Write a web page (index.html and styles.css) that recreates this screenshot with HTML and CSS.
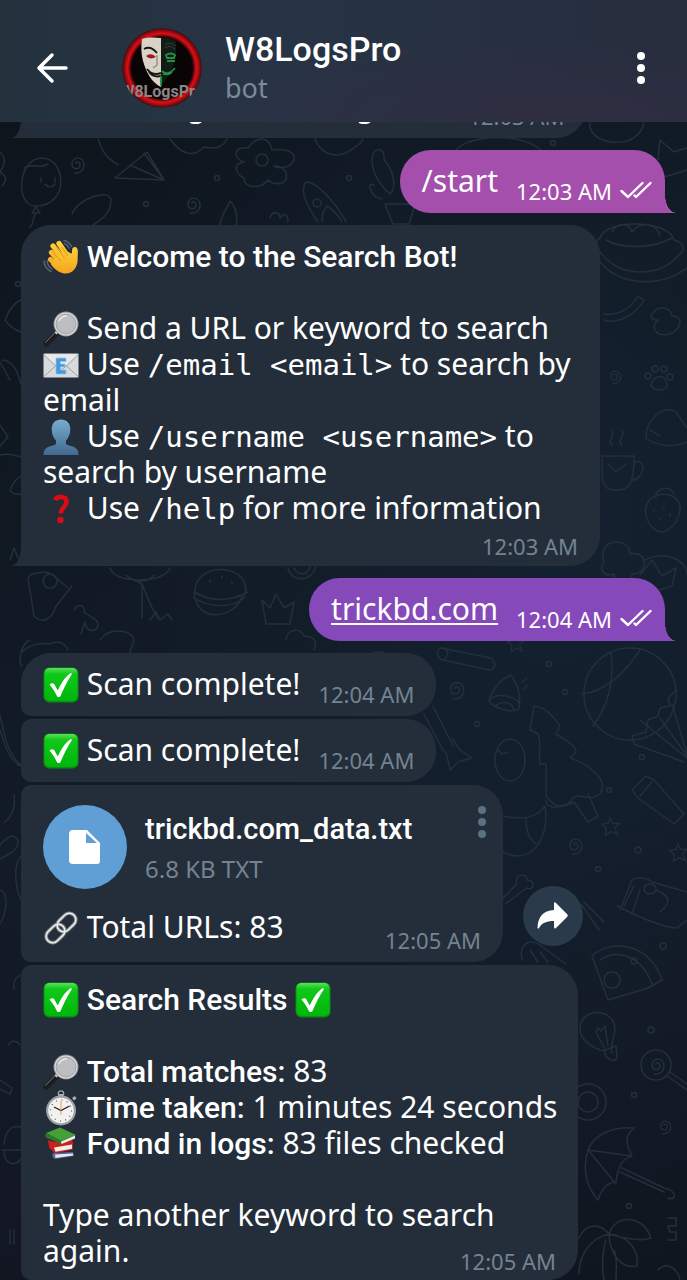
FILE: index.html
```html
<!DOCTYPE html>
<html lang="en">
<head>
  <meta charset="UTF-8" />
  <meta name="viewport" content="width=device-width, initial-scale=1.0" />
  <title>W8LogsPro</title>
  <link rel="stylesheet" href="styles.css">
</head>
<body>
  <!-- Shared emoji -->
  <svg class="sprite" aria-hidden="true">
    <defs>
      <linearGradient id="green" x1="0" y1="0" x2="0" y2="1">
        <stop offset="0" stop-color="#5be05b"/><stop offset=".18" stop-color="#10c81a"/><stop offset="1" stop-color="#00b50c"/>
      </linearGradient>
      <linearGradient id="person" x1="0" y1="0" x2="0" y2="1">
        <stop offset="0" stop-color="#79acd0"/><stop offset="1" stop-color="#41698f"/>
      </linearGradient>
      <linearGradient id="hand" x1="0" y1="0" x2="0" y2="1">
        <stop offset="0" stop-color="#ffcf3a"/><stop offset="1" stop-color="#f3a51c"/>
      </linearGradient>
    </defs>
    <symbol id="check" viewBox="0 0 36 36">
      <rect x=".5" y=".5" width="35" height="35" rx="6" fill="#078f12"/>
      <rect x="1.5" y="1" width="33" height="33" rx="5" fill="url(#green)"/>
      <path d="M6.500 17.500c2.500-2 4.500-1.500 5.500 1l2.700 5C18 16.500 22 10 27 6.500c1-.6 2.500-.2 1.500 1.200C24 14.500 20.500 22 17.500 29c-.6 1.300-3 1.400-3.600 0C12 25 9.500 21 6.500 17.500z" fill="#fff"/>
    </symbol>
    <symbol id="glass" viewBox="0 0 36 36">
      <path d="M3 33 14 22" stroke="#1d1d1f" stroke-width="5.500" stroke-linecap="round"/>
      <path d="M2.500 31.500 12 21.500" stroke="#77797c" stroke-width="1"/>
      <path d="m12.500 22.500 3.500-3.500" stroke="#c9cbcd" stroke-width="3"/>
      <circle cx="23" cy="13" r="12.500" fill="#8e9194"/>
      <circle cx="23" cy="13" r="11.500" fill="#dcdedf"/>
      <circle cx="23" cy="13" r="10" fill="#bcbec1" stroke="#94979a" stroke-width=".8"/>
      <path d="M16 10a8 8 0 0 1 8-5" fill="none" stroke="#e6e7e8" stroke-width="1.500"/>
    </symbol>
    <symbol id="wave" viewBox="0 0 36 36">
      <g stroke="url(#hand)" stroke-linecap="round" stroke-width="5.200" fill="none">
        <path d="M8.500 13.500 18 24M10 7l12 14M16 4.500 26 19M7.500 20.500l7 7"/>
      </g>
      <path d="M12 20c4-5 11-10 16-5.500l1-.5c0-3.500 0-5 1.800-5.700 2.200-.8 3.900 1 4 3.500.1 3-.2 6-.2 9.500C34.500 29 29 35.500 21 34.500c-5-.7-10-5-13-9z" fill="url(#hand)"/>
      <path d="M9 12.500 18 22M13 8l9 11.500M18.500 8 25 17" stroke="#d98f15" stroke-width=".8" fill="none"/>
      <path d="M1 22c.3 5 3 8.500 7 10.500M4 22c.5 3.500 2.200 6 5 8M21 1.500c3.500.5 6 3 7.500 6M21.500 4.500c2 .7 3.500 2.300 4.500 4.500" fill="none" stroke="#59646d" stroke-width="1.500" stroke-linecap="round"/>
    </symbol>
    <symbol id="mail" viewBox="0 0 36 36">
      <rect x=".5" y="6.500" width="35" height="24" rx="1" fill="#d8dadb"/>
      <path d="M.5 7.500 15 21c2 1.700 4 1.700 6 0L35.500 7.500M.5 30 13 18.500M35.500 30 23 18.500" fill="#e8e9e9" stroke="#8d9296" stroke-width=".8"/>
      <path d="M13 11h10v3.500h-5.500V17H22v3h-4.500v3H23v4H13z" fill="#4a98dd" stroke="#90c6ee" stroke-width=".7"/>
    </symbol>
    <symbol id="user" viewBox="0 0 36 36">
      <path d="M18 .5c5.800 0 9.500 4 9.300 10-.1 4.800-1.800 8.500-4.300 11v3c0 1.500 3.500 2 6.500 3 4 1.400 6 3.500 6 8.500H.5c0-5 2-7.100 6-8.500 3-1 6.500-1.500 6.500-3v-3c-2.500-2.500-4.200-6.200-4.300-11C8.500 4.500 12.200.5 18 .5z" fill="url(#person)"/>
    </symbol>
    <symbol id="question" viewBox="0 0 36 36">
      <path d="M12 9C14 4.800 23.500 4.500 23.500 11c0 4.500-5.500 5.500-5.800 11.500" fill="none" stroke="#e00b12" stroke-width="4.500"/>
      <circle cx="17.500" cy="29" r="3.200" fill="#e00b12"/>
    </symbol>
    <symbol id="link" viewBox="0 0 36 36">
      <g fill="none" stroke="#82868a" stroke-width="3.600">
        <rect x="13" y="6" width="21" height="13" rx="6.500" transform="rotate(-44 23.500 12.500)"/>
        <rect x="2" y="17" width="21" height="13" rx="6.500" transform="rotate(-44 12.500 23.500)"/>
      </g>
      <g fill="none" stroke="#eceded" stroke-width="1.500">
        <rect x="13" y="6" width="21" height="13" rx="6.500" transform="rotate(-44 23.500 12.500)"/>
        <rect x="2" y="17" width="21" height="13" rx="6.500" transform="rotate(-44 12.500 23.500)"/>
      </g>
    </symbol>
    <symbol id="stopwatch" viewBox="0 0 36 36">
      <circle cx="18" cy="3.500" r="2.700" fill="none" stroke="#a3a7aa" stroke-width="1.300"/>
      <path d="M16 4h4v4h-4zM29 8l3-2 1.500 2.500-2.500 2z" fill="#adb0b3"/>
      <circle cx="18" cy="20.500" r="15" fill="#9da1a4"/>
      <circle cx="18" cy="20.500" r="12.800" fill="#f1f1ef"/>
      <circle cx="18" cy="20.500" r="10.500" fill="none" stroke="#5a5d60" stroke-width="1.200" stroke-dasharray="1 4.500"/>
      <path d="m11 17 7 3.500 8.500-4.500" fill="none" stroke="#222" stroke-width="1.200"/>
      <path d="M18 11v14" stroke="#ea8a3c" stroke-width=".8"/>
    </symbol>
    <symbol id="books" viewBox="0 0 36 36">
      <path d="m10 27 20-1 1 4-19 3c-2.500-.7-3.500-4-2-6z" fill="#5863a8"/>
      <path d="m12 28.500 18-1v2l-17.500 2.500z" fill="#e9e9e4"/>
      <path d="M5 14c8 3 15 3 24-.5l1 3v7L12 27.500l-6-6z" fill="#c9201f"/>
      <path d="m11 21.500 18-3v4.200l-16.500 3z" fill="#efeee8"/>
      <path d="M3 7 17 1.500 33 9 18 15z" fill="#45a038"/>
      <path d="M3 7c-1.500 2.500-.5 4 1 5l14 6 14-5.500v-2L18 15z" fill="#2c7828"/>
      <path d="m18 15.500 14-6v3l-13.500 5.500z" fill="#eceee6"/>
    </symbol>
    <symbol id="ticks" viewBox="0 0 32 18">
      <path d="m1.500 10 6.500 6L22.500 2M14.500 14.500l1.500 1.500L30.500 2" fill="none" stroke="#fff" stroke-width="2.400" stroke-linecap="round" stroke-linejoin="round"/>
    </symbol>
    <symbol id="dots" viewBox="0 0 10 34">
      <circle cx="5" cy="5" r="4"/><circle cx="5" cy="17" r="4"/><circle cx="5" cy="29" r="4"/>
    </symbol>
    <symbol id="spiral" viewBox="0 0 24 24">
      <path d="M12 12c-1-3 4-3 4 1 0 5-8 5-8-1 0-8 12-8 12 1 0 6-5 9-10 8"/>
    </symbol>
    <symbol id="star" viewBox="0 0 24 24">
      <path d="m11 2 3 6 7 0-5 5 3 7-7-3-6 4 1-7-5-5 7-1z"/>
    </symbol>
  </svg>

  <header class="topbar">
    <button class="icon-btn" aria-label="Back">
      <svg width="34" height="34" viewBox="0 0 34 34"><path d="M30 17H3M16 4 3 17l13 13" fill="none" stroke="#fff" stroke-width="3.500" stroke-linecap="round" stroke-linejoin="round"/></svg>
    </button>
    <svg class="avatar" viewBox="0 0 80 80" role="img" aria-label="Bot avatar">
      <defs>
        <radialGradient id="ring">
          <stop offset="0" stop-color="#050505"/><stop offset=".76" stop-color="#0b0405"/><stop offset=".82" stop-color="#8d0a10"/><stop offset=".86" stop-color="#e20d16"/><stop offset=".91" stop-color="#a80d14"/><stop offset="1" stop-color="#3d0a0e"/>
        </radialGradient>
        <clipPath id="round"><circle cx="40" cy="40" r="40"/></clipPath>
      </defs>
      <g clip-path="url(#round)">
        <circle cx="40" cy="40" r="40" fill="url(#ring)"/>
        <path d="M20 11c6-2 12-1.500 19-1v49c-9-4-15-15-18-26-2-7-2-15-1-22z" fill="#d9d3c6"/>
        <path d="M39 10c6-1 11 0 15 3 1 8 0 17-3 25-3 8-7 14-12 19z" fill="#131a17"/>
        <path d="M22 21c5-3 9-1 13 4M25 41c4 5 9 6 14 4M27 44c3 4 8 5 12 4" fill="none" stroke="#191412" stroke-width="2"/>
        <path d="M24 28c4-3 7-2 10 1-4 2-7 2-10-1z" fill="#a11325"/>
        <path d="M35 27v10l-4 3" fill="none" stroke="#9b9185" stroke-width="1.500"/>
        <path d="M44 27c3-2 6-2 9 0l-1 3h-7zM45 33h8M40 43c4 4 9 2 13-3M41 46c4 1 7 0 9-2M39 48v10" fill="none" stroke="#1f9140" stroke-width="1.800"/>
        <path d="M43 17c4-3 7-2 10 1M43 20c4-3 7-1 10 1" fill="none" stroke="#39433e"/>
        <text class="avatar-text" x="40" y="69" text-anchor="middle">W8LogsPro</text>
      </g>
    </svg>
    <div class="peer">
      <h1 class="peer-name">W8LogsPro</h1>
      <div class="peer-status">bot</div>
    </div>
    <button class="icon-btn menu-btn" aria-label="More options">
      <svg width="10" height="34" fill="#fff"><use href="#dots"/></svg>
    </button>
  </header>

  <main class="chat">
    <svg class="wallpaper" viewBox="0 122 687 1158" preserveAspectRatio="xMidYMin slice" aria-hidden="true">
      <g fill="none" stroke="#22303c" stroke-width="1.500" stroke-linecap="round" stroke-linejoin="round">
        <!-- balloon, plane, flower -->
        <path d="M42 158c24 0 28 48-6 48-22 0-18-48 6-48zM24 168c10-6 14 2 24-4M36 207l-4 6h8zM36 213c-5 6-1 10-6 14M41 178v4M55 178v4M45 184c3 4 7 4 10 0"/>
        <path d="m115 178 32-26 17 28zM130 165l34 15-20-27M98 139c6 18 12 20 20 26"/>
        <path d="M170 139c10 14 22 20 34 8 8 2 18 2 23-8"/>
        <path d="M248 148c10-14 22-10 24 2 14-2 24 2 22 10-4 10-18 8-20 6 10 0 14 6 12 14-6 6-14 4-18 0-8 10-24 8-24-2-8-4-12-14 0-16-12-4-10-16 4-14z"/><circle cx="262" cy="160" r="6"/>
        <path d="M72 214c6-16 38-26 39-14 0 16-14 22-20 26M220 225c2-12 8-18 10-24 6 6 8 16 6 24M270 218c2-8 10-6 10 0 4-6 8-4 8 4"/>
        <path d="M306 182c12 0 32 24 40 40M306 182c-8 10 4 28 12 40M322 222c0-8 2-14 6-16 4 4 10 8 14 16"/><circle cx="317" cy="203" r="4"/>
        <path d="M315 139c6 16 24 22 40 8 4-2 6-4 8-8M372 160c0-14 14-14 12 0 8 8 14 26 6 34-10-8-18-22-18-34zM374 185c-8-4-4 12 8 14M385 204h30l-6 20h-16z"/>
        <path d="M452 160c0-30 90-30 94 0M590 122c-4 24 50 30 54 0M658 160l2-20 14 12 13-4M661 178l26-8"/>
        <!-- right column -->
        <path d="M600 238c6-20 70-18 74 2 10 2 12 10 4 16-20 22-58 22-78-4-6-6-4-12 0-14zM606 240c18 10 48 8 66-2M612 232c6-12 18-8 20 0 8-12 26-8 28 4M600 262c20 24 60 26 87 6M604 320c10 4 30-2 40-20l-6-4c-8 14-22 20-34 18"/>
        <path d="M654 312c4-6 16-6 18 4 8 0 10 6 6 12-8 10-22 8-24 0 0-4 2-6 4-8-6 0-10-4-4-8z"/>
        <path d="M651 384c4-10 14-10 16 0 2 8-16 8-16 0z"/><circle cx="648" cy="376" r="3"/><circle cx="655" cy="369" r="3"/><circle cx="664" cy="369" r="3"/><circle cx="670" cy="377" r="3"/>
        <path d="M646 438c0-20 18-34 30-26l11 16M646 438c10 8 28 10 41 4M650 430l10 6M602 456h32c0 32-6 34-20 34-14 0-12-16-12-34zM634 462c14-4 10 18-2 18M608 464l8 8 10-8M612 446c-6-8 4-8 0-16M622 446c-6-8 4-8 0-16"/>
        <path d="M648 502c10-14 34-8 32 8-2 14-12 22-20 22-12-4-18-20-12-30zM656 498c-2-10 14-14 18-4M654 510v2M664 508v2M660 518v2M670 514v2M645 560c20-10 42 0 42 14M604 562c-8-24 26-26 26-8 18-4 20 20 2 20 0 14-18 12-18 0-10 4-16-6-10-12zM640 575l12-15 10 16 14-8-4 18-26 8"/>
        <!-- left edge -->
        <path d="M-4 150c8 4 12 10 4 22 6 4 8 8 2 14M5 320c4-10 10-18 16-20M5 320c4 6 10 10 16 12M2 360c6 0 14 4 19 24M0 362l10 18M0 425l8 12-12 14M0 455c8-2 14 0 21 2M10 490c4-10 8-12 11-14M10 490c4 6 8 4 11 4"/>
        <path d="M28 578c2-6 20-8 26-2l14 12M28 578l6 38c8 8 18 4 22-10l16-20M50 574a7 7 0 1 0 .1 0M10 560l4-12 4 10M74 610c4-8 12-4 10 2l12 8a6 6 0 1 1-10 4M85 622l-4 12"/>
        <path d="M110 568c4 16 54 16 60 0M126 575c8 8 22 8 28 0M134 580l8 4v34M142 584c6 14 8 22 16 34M150 620l6-8 4 8 8-6 4 6M30 640c-10 4-12 24-8 26M22 652c6-6 16-10 28-8 8-4 14-2 18 6"/>
        <path d="M196 584c8-20 46-20 50 4l-2 10c-14 12-38 8-50 0zM194 592c16 10 36 10 54 0M196 600c4 22 40 18 46-4M210 580v2M222 576v2M232 582v2M100 640c8-12 30-12 34 0l-4 12M262 600l8 8 6-14 8 14 10-6-4 22h-24zM288 568c4 16 26 14 28-4M294 568c4 8 14 8 16-2"/>
        <path d="M286 640c0-10 14-14 18-4 10 0 14 6 10 14M370 654c20-8 20 8 8 10"/>
        <!-- middle right -->
        <path d="m441 648 50 10c6 4 4 12-2 12l-46-10c-8-2-6-12-2-12zM444 648c6 2 4 10-1 12M511 675c-10 4-18 14-22 26 6 8 22 12 30 8 2-14-2-26-8-34zM489 700c8-8 26-4 31 4M496 706c6-6 16-4 18 4M522 682l4-3M524 690l3-5M433 706l20 40M424 714l20 38M446 752l4 18 8-8 14-4-12-8-8-12"/>
        <ellipse cx="510" cy="760" rx="15" ry="21"/><path d="m498 750 4 4 6-2"/>
        <path d="M534 706c14 2 20 12 26 20l-4 8c10 6 20 12 20 18l-6 6c18 6 40 22 30 36-14 10-22-6-30 8-10 8-18 2-24-6V764h-6c-2-8 2-20-2-30l-8-4z"/>
        <circle cx="630" cy="694" r="46"/><path d="M611 652c4 30-4 56-18 74M640 650c-20 30-40 42-58 44M676 690l-8 8 2 8-10 2-2 8-10 4-2 12-14 4 2 8 50 18M672 704l15 50M660 718l27 38M640 720l47 38"/>
        <path d="m632 790 14-14 8 4 30 34-10 10-36-26zM652 782l-12 14M546 800c0 12 20 6 28 2l14 20 10-6-10-22M503 816c20 4 34 2 42-10 4 24-6 48-26 50-8 0-12-2-16-4M526 818c0 14 4 22 10 26"/>
        <path d="m503 898 14-14c-4-10 10-12 10-4 10 0 6 12 0 8l-22 16M620 910l12-30c6-4 16-2 20 2l35 10M617 906c20 10 46 22 60 22l10-8M634 886l-10 20M640 890l-8 24M650 884a6 5 0 1 0 .1 0M656 890c14 6 16 12 4 22M581 904l18 26M584 902l20 20M522 960c-4-20 12-22 22-12l22 16M530 950l8 12M540 952l8 10"/>
        <path d="M592 956c16-16 56-16 70 24l-14 8-40 12zM600 960c14-10 40-8 52 24M612 972a8 8 0 1 0 .1 0M634 958a3 3 0 1 0 .1 0"/>
        <!-- bottom right -->
        <path d="M604 1051c-16-4-24-14-24-22 0-22 34-22 35 0 0 8-5 12-3 24M604 1051c2 8 10 12 13 7l-1-12M596 1032l2-4 3 3 4-5 3 20M596 1032l9 17M604 1051l11-5"/>
        <circle cx="656" cy="1065" r="15"/><circle cx="588" cy="1102" r="18"/><circle cx="588" cy="1102" r="10"/><path d="m667 1076 20 14M670 1072l17 12"/>
        <path d="M588 1150c6-16 26-24 46-22-10 8-8 16-2 28-8 2-14 8-16 26-8 0-14 6-18 18-12-14-16-30-10-50zM588 1150l44 6M588 1150l28 34M622 1168l42 20c14 2 12 14 4 10M620 1172l44 20"/>
        <path d="M609 1234c6-20 34-20 42 4-10 4-28 0-42-4zM609 1234c-10-12-24-10-30 4M609 1234c20 2 30 16 28 32-16 4-28-14-28-32zM609 1234c-18 4-30 20-30 40M606 1240c-4 12-4 30-2 40M614 1250c4 10 2 20 2 30M668 1218h8v8h-8l2 6h6v8h-8M658 1270c10-10 20 0 22 10"/>
        <!-- bottom left -->
        <path d="M0 715c4 20 8 40 21 50M0 730c6 20 10 30 20 36M14 795c2 14-2 22-10 28M0 845c10-12 16-10 18-4 0 10-8 12-18 18M21 856c-8 10-6 30 0 44M0 890c8 2 8 20 0 34M20 975c-8 6-6 10-6 14M8 1045c4-6 10-4 12 0M0 1080l12 8-2 6-12-6M4 1144c2-16 10-20 18-16M4 1150c0 14 10 18 18 8M2 1150h20M10 1230v14M14 1230v14"/>
      </g>
      <g fill="none" stroke="#22303c" stroke-width="1.500">
        <use href="#spiral" x="64" y="152" width="24" height="24"/><use href="#spiral" x="180" y="192" width="24" height="24"/><use href="#spiral" x="442" y="676" width="26" height="26"/>
        <use href="#spiral" x="562" y="833" width="24" height="24"/><use href="#spiral" x="604" y="366" width="20" height="20"/><use href="#spiral" x="644" y="1053" width="24" height="24"/><use href="#spiral" x="654" y="1116" width="20" height="20"/>
        <use href="#star" x="506" y="634" width="20" height="20"/><use href="#star" x="600" y="816" width="22" height="22"/><use href="#star" x="668" y="842" width="22" height="22"/>
        <circle cx="217" cy="178" r="2.500"/><circle cx="146" cy="204" r="2.500"/><circle cx="349" cy="178" r="2.500"/><circle cx="553" cy="143" r="2.500"/><circle cx="549" cy="664" r="2.500"/><circle cx="565" cy="692" r="2.500"/>
        <circle cx="477" cy="724" r="2.500"/><circle cx="642" cy="757" r="2.500"/><circle cx="609" cy="790" r="2.500"/><circle cx="638" cy="850" r="3"/><circle cx="598" cy="869" r="2.500"/><circle cx="663" cy="946" r="3"/>
        <circle cx="651" cy="1030" r="3"/><circle cx="634" cy="1095" r="2.500"/><circle cx="629" cy="1206" r="2.500"/><circle cx="18" cy="284" r="2.500"/>
      </g>
    </svg>

    <div class="message in tail">
      <div class="text"><svg class="emoji"><use href="#mail"/></svg> Running scan on logs text</div>
      <time class="time">12:03 AM</time>
    </div>

    <div class="message out pink tail group">
      <div class="text">/start</div>
      <time class="time">12:03 AM</time>
      <svg class="ticks" role="img" aria-label="Read"><use href="#ticks"/></svg>
    </div>

    <div class="message in stacked welcome tail group">
      <div class="text">
        <svg class="emoji"><use href="#wave"/></svg> <b>Welcome to the Search Bot!</b><br><br>
        <svg class="emoji"><use href="#glass"/></svg> Send a URL or keyword to search<br>
        <svg class="emoji"><use href="#mail"/></svg> Use <code>/email &lt;email&gt;</code> to search by email<br>
        <svg class="emoji"><use href="#user"/></svg> Use <code>/username &lt;username&gt;</code> to search by username<br>
        <svg class="emoji"><use href="#question"/></svg> Use <code>/help</code> for more information
      </div>
      <time class="time">12:03 AM</time>
    </div>

    <div class="message out purple tail group">
      <div class="text"><a href="#">trickbd.com</a></div>
      <time class="time">12:04 AM</time>
      <svg class="ticks" role="img" aria-label="Read"><use href="#ticks"/></svg>
    </div>

    <div class="message in first group">
      <div class="text"><svg class="emoji"><use href="#check"/></svg> Scan complete!</div>
      <time class="time">12:04 AM</time>
    </div>

    <div class="message in">
      <div class="text"><svg class="emoji"><use href="#check"/></svg> Scan complete!</div>
      <time class="time">12:04 AM</time>
    </div>

    <div class="file-row">
      <div class="message in stacked file">
        <div class="file-head">
          <div class="file-icon">
            <svg width="32" height="34" viewBox="0 0 32 34"><path d="M4 0h14l13 13v18a3 3 0 0 1-3 3H4a4 4 0 0 1-4-4V4a4 4 0 0 1 4-4z" fill="#fff"/><path d="M17 3v10h11z" fill="#609fd5"/></svg>
          </div>
          <div class="file-info">
            <div class="file-name">trickbd.com_data.txt</div>
            <div class="file-size">6.8 KB TXT</div>
          </div>
          <button class="icon-btn file-menu" aria-label="File options">
            <svg width="10" height="34" fill="#5c7084"><use href="#dots"/></svg>
          </button>
        </div>
        <div class="caption">
          <div class="text"><svg class="emoji"><use href="#link"/></svg> Total URLs: 83</div>
          <time class="time">12:05 AM</time>
        </div>
      </div>
      <button class="share-btn" aria-label="Share">
        <svg width="32" height="28" viewBox="0 0 32 28"><path d="M17 1.500c0-1.500 1-1.500 2-.6l11 11c1 1 1 2 0 3l-11 11c-1 1-2 .8-2-.8V19C9 19 5 21 2 26c-.8 1-1.500.8-1.500-.5C1 15 6 8.500 17 8z" fill="#fff"/></svg>
      </button>
    </div>

    <div class="message in results">
      <div class="text">
        <svg class="emoji"><use href="#check"/></svg> <b>Search Results</b> <svg class="emoji"><use href="#check"/></svg><br><br>
        <svg class="emoji"><use href="#glass"/></svg> <b>Total matches:</b> 83<br>
        <svg class="emoji"><use href="#stopwatch"/></svg> <b>Time taken:</b> 1 minutes 24 seconds<br>
        <svg class="emoji"><use href="#books"/></svg> <b>Found in logs:</b> 83 files checked<br><br>
        Type another keyword to search again.
      </div>
      <time class="time">12:05 AM</time>
    </div>
  </main>
</body>
</html>
```
FILE: styles.css
```css
* {
  box-sizing: border-box;
}

body {
  margin: 0;
  height: 100vh;
  display: flex;
  flex-direction: column;
  overflow: hidden;
  font-family: "Noto Sans", sans-serif;
  font-size: 30px;
  line-height: 36px;
  color: #fff;
  background-color: #121c27;
}

.sprite {
  position: absolute;
  width: 0;
  height: 0;
}

.icon-btn {
  display: flex;
  padding: 0;
  border: none;
  background: none;
  cursor: pointer;
}

/* Header */
.topbar {
  flex: none;
  display: flex;
  align-items: center;
  height: 122px;
  padding: 14px 41px 0 36px;
  z-index: 1;
  background: radial-gradient(ellipse 50% 70% at 78% 100%, #302e42, transparent), linear-gradient(90deg, #24323e, #273445 40%, #262d3d);
}

.avatar {
  width: 80px;
  height: 80px;
  margin-left: 52px;
}

.avatar-text {
  font: 700 16px Roboto, sans-serif;
  fill: #8b8685;
}

.peer {
  flex: 1;
  margin-left: 23px;
}

.peer-name {
  margin: 0;
  font: 500 34px/40px Roboto, sans-serif;
}

.peer-status {
  font-size: 27px;
  line-height: 38px;
  color: #7a8b9a;
}

/* Chat */
.chat {
  position: relative;
  flex: 1;
  min-height: 0;
  display: flex;
  flex-direction: column;
  justify-content: flex-end;
  align-items: flex-start;
  gap: 3px;
  padding: 0 22px 0 21px;
  overflow: hidden;
  background: radial-gradient(ellipse 70% 60% at 80% 35%, #142130, transparent), linear-gradient(170deg, #0e151d, #121b27 60%, #131825 80%, #10161f);
}

.wallpaper {
  position: absolute;
  inset: 0;
  width: 100%;
  height: 100%;
}

.message {
  --bubble: #232e3a;
  position: relative;
  flex: none;
  display: flex;
  align-items: flex-end;
  gap: 18px;
  min-height: 63px;
  padding: 13px 22px 8px 22px;
  border-radius: 10px 30px 30px 10px;
  background: var(--bubble);
}

.group {
  margin-top: 9px;
}

.message .text {
  padding-bottom: 6px;
}

.first {
  border-top-left-radius: 30px;
}

.tail {
  border-radius: 30px 30px 30px 0;
}

.tail::after {
  content: "";
  position: absolute;
  bottom: 0;
  left: -10px;
  width: 10px;
  height: 18px;
  background: radial-gradient(ellipse 100% 100% at 0 0, transparent 97%, var(--bubble));
}

.out {
  align-self: flex-end;
  padding-right: 13px;
  border-radius: 31px 31px 0 31px;
}

.out::after {
  left: auto;
  right: -11px;
  width: 11px;
  background: radial-gradient(ellipse 100% 100% at 100% 0, transparent 97%, var(--bubble));
}

.pink {
  --bubble: #a44fac;
}

.purple {
  --bubble: #8549b9;
}

.text a {
  color: inherit;
  text-decoration: underline;
  text-decoration-thickness: 2px;
  text-underline-offset: 3px;
}

.text b {
  font-family: Roboto, sans-serif;
  font-weight: 500;
  line-height: 1;
}

.text code {
  font-family: "DejaVu Sans Mono", monospace;
  font-size: 29px;
  line-height: 1;
}

.emoji {
  width: 36px;
  height: 36px;
  margin: -4px 0;
  vertical-align: -4px;
}

.time {
  font-size: 22px;
  line-height: 28px;
  color: #748391;
  white-space: nowrap;
}

.out .time {
  color: #fff;
}

.ticks {
  width: 32px;
  height: 18px;
  margin: 0 0 6px -10px;
}

/* Long messages */
.stacked {
  flex-direction: column;
  align-items: stretch;
  gap: 0;
}

.stacked > .time {
  align-self: flex-end;
}

.welcome {
  max-width: 579px;
  padding-bottom: 6px;
}

.results {
  display: grid;
  max-width: 557px;
  padding: 16px 14px 5px 22px;
}

.results .text,
.results .time {
  grid-area: 1 / 1;
}

.results .time {
  place-self: end;
  margin-right: 8px;
}

/* File message */
.file-row {
  flex: none;
  display: flex;
  align-items: flex-end;
  gap: 20px;
}

.file {
  width: 482px;
  max-width: 75vw;
  gap: 20px;
  padding-top: 20px;
}

.file-head {
  display: flex;
  align-items: flex-start;
}

.file-icon {
  display: flex;
  align-items: center;
  justify-content: center;
  width: 84px;
  height: 84px;
  border-radius: 50%;
  background: #609fd5;
}

.file-info {
  flex: 1;
  margin-left: 18px;
  padding-top: 4px;
}

.file-name {
  font: 500 29px/40px Roboto, sans-serif;
}

.file-size {
  font-size: 24px;
  line-height: 40px;
  color: #748391;
}

.file-menu {
  margin-right: -6px;
}

.caption {
  display: flex;
  align-items: flex-end;
  justify-content: space-between;
}

.caption .text {
  padding-bottom: 9px;
}

.share-btn {
  display: flex;
  align-items: center;
  justify-content: center;
  width: 60px;
  height: 60px;
  margin-bottom: 16px;
  padding: 0;
  border: none;
  border-radius: 50%;
  background: #2b3a4b;
  cursor: pointer;
  z-index: 1;
}
```
